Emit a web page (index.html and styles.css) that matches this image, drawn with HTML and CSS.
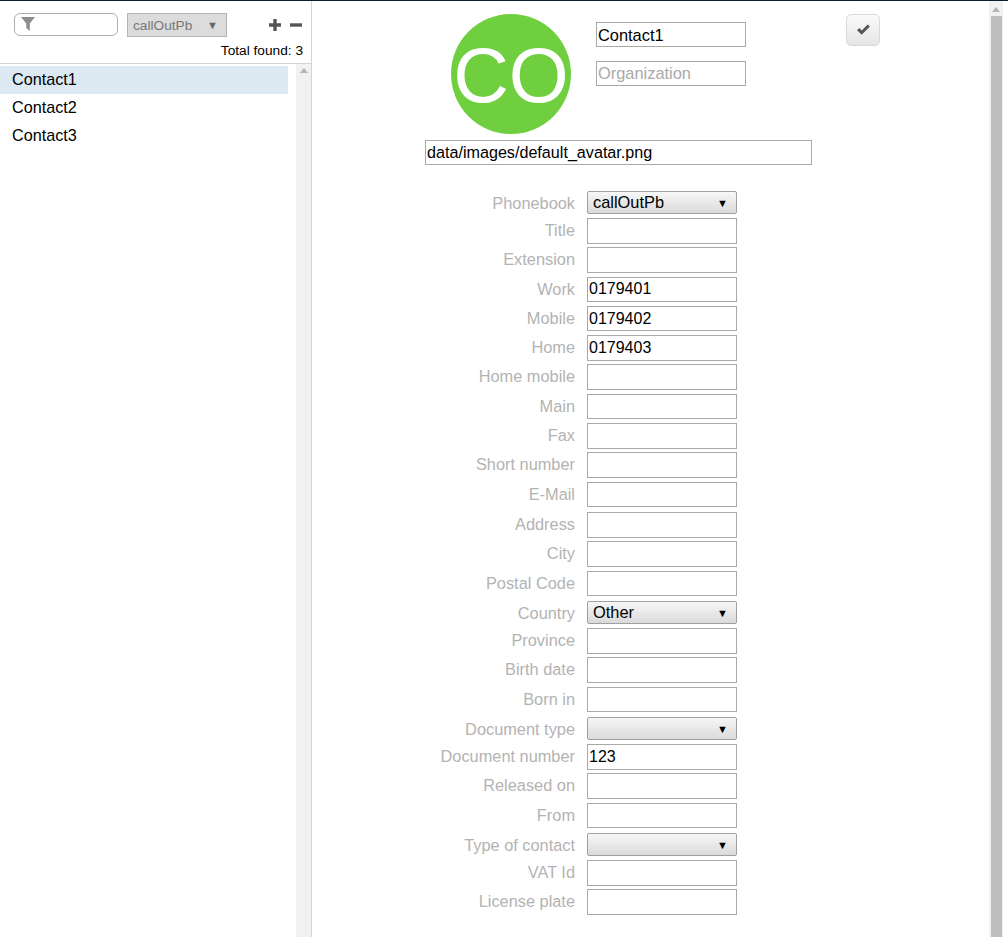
FILE: index.html
```html
<!DOCTYPE html>
<html lang="en">
<head>
<meta charset="utf-8">
<title>Contacts</title>
<link rel="stylesheet" href="styles.css">
</head>
<body>
<div class="app">
  <aside class="sidebar">
    <div class="toolbar">
      <div class="toolbar-row">
        <div class="filter">
          <svg class="filter-icon" viewBox="0 0 14 14" width="14" height="14"><path d="M0 0H14L8.8 6.6V14L5.2 11V6.6Z"/></svg>
        </div>
        <div class="pb-select"><span>callOutPb</span><span class="pb-arrow">▼</span></div>
        <div class="actions">
          <svg viewBox="0 0 12 12" width="12" height="12"><path d="M4.3 0H7.7V4.3H12V7.7H7.7V12H4.3V7.7H0V4.3H4.3Z"/></svg>
          <svg viewBox="0 0 12 12" width="12" height="12"><path d="M0 4.3H12V7.7H0Z"/></svg>
        </div>
      </div>
      <div class="total">Total found: 3</div>
    </div>
    <div class="list-wrap">
      <ul class="list">
        <li class="item selected">Contact1</li>
        <li class="item">Contact2</li>
        <li class="item">Contact3</li>
      </ul>
      <div class="list-scroll"><span class="arrow-up"></span></div>
    </div>
  </aside>
  <main class="main">
    <div class="form">
      <div class="head">
        <div class="avatar">CO</div>
        <div class="names">
          <input class="field name-field low-text" value="Contact1">
          <input class="field name-field" placeholder="Organization">
        </div>
        <button class="save" type="button"><svg viewBox="0 0 14 12" width="15" height="12"><path d="M0.6 6.2L2.8 4L5.2 6.4L11.2 0.4L13.4 2.6L5.2 10.8Z"/></svg></button>
      </div>
      <input class="field path-field" value="data/images/default_avatar.png">
      <div class="rows">
        <div class="row select-row"><label>Phonebook</label><div class="select"><span>callOutPb</span><span class="sel-arrow">▼</span></div></div>
        <div class="row"><label>Title</label><input class="field"></div>
        <div class="row"><label>Extension</label><input class="field"></div>
        <div class="row"><label>Work</label><input class="field" value="0179401"></div>
        <div class="row"><label>Mobile</label><input class="field" value="0179402"></div>
        <div class="row"><label>Home</label><input class="field" value="0179403"></div>
        <div class="row"><label>Home mobile</label><input class="field"></div>
        <div class="row"><label>Main</label><input class="field"></div>
        <div class="row"><label>Fax</label><input class="field"></div>
        <div class="row"><label>Short number</label><input class="field"></div>
        <div class="row"><label>E-Mail</label><input class="field"></div>
        <div class="row row-break"><label>Address</label><input class="field"></div>
        <div class="row"><label>City</label><input class="field"></div>
        <div class="row"><label>Postal Code</label><input class="field"></div>
        <div class="row select-row"><label>Country</label><div class="select"><span>Other</span><span class="sel-arrow">▼</span></div></div>
        <div class="row"><label>Province</label><input class="field"></div>
        <div class="row"><label>Birth date</label><input class="field"></div>
        <div class="row"><label>Born in</label><input class="field"></div>
        <div class="row select-row"><label>Document type</label><div class="select"><span></span><span class="sel-arrow">▼</span></div></div>
        <div class="row"><label>Document number</label><input class="field" value="123"></div>
        <div class="row"><label>Released on</label><input class="field"></div>
        <div class="row"><label>From</label><input class="field"></div>
        <div class="row select-row"><label>Type of contact</label><div class="select"><span></span><span class="sel-arrow">▼</span></div></div>
        <div class="row"><label>VAT Id</label><input class="field"></div>
        <div class="row"><label>License plate</label><input class="field"></div>
      </div>
    </div>
    <div class="main-scroll"><span class="arrow-up"></span><div class="thumb"></div></div>
  </main>
</div>
</body>
</html>
```

FILE: styles.css
```css
* { box-sizing: border-box; }
html, body { margin: 0; height: 100%; overflow: hidden; }
body { font-family: "Liberation Sans", Arial, sans-serif; font-size: 16px; color: #000; background: #fff; }
.app { display: flex; height: 937px; border-top: 1px solid #0f1f33; }
.sidebar { width: 312px; flex: none; border-right: 1px solid #d4d4d4; display: flex; flex-direction: column; }
.toolbar { height: 63px; flex: none; border-bottom: 1px solid #d4d4d4; padding: 12px 8px 0 14px; }
.toolbar-row { display: flex; align-items: flex-start; }
.filter { width: 104px; height: 23px; border: 1px solid #b0b0b0; border-radius: 6px; padding: 3px 0 0 6px; }
.filter-icon { fill: #8e8e8e; display: block; }
.pb-select { width: 100px; height: 24px; margin-left: 9px; background: #dcdcdc; border: 1px solid #b4b4b4; color: #777; font-size: 13.7px; display: flex; justify-content: space-between; align-items: center; padding: 0 8px 0 5px; }
.pb-arrow { font-size: 11px; color: #666; }
.actions { display: flex; gap: 9px; margin-left: 42px; margin-top: 6px; }
.actions svg { fill: #555; display: block; }
.total { font-size: 13.7px; text-align: right; margin-top: 6px; line-height: 15px; }
.list-wrap { flex: 1; display: flex; padding-top: 2px; min-height: 0; }
.list { list-style: none; margin: 0; padding: 0; width: 288px; flex: none; font-size: 16.2px; }
.item { height: 28px; line-height: 27px; padding-left: 12px; }
.item.selected { background: #dce8f2; }
.list-scroll { width: 15px; margin-left: 8px; background: #f1f1f1; padding-top: 4px; margin-top: -2px; display: flex; justify-content: center; align-items: flex-start; }
.arrow-up { display: block; width: 0; height: 0; border: 4px solid transparent; border-top: 0; border-bottom: 5px solid #b4b4b4; }
.main { flex: 1; position: relative; min-width: 0; }
.form { width: 500px; margin-left: 113px; padding-top: 13px; }
.head { display: flex; align-items: flex-start; height: 120px; padding-left: 26px; }
.avatar { width: 120px; height: 120px; border-radius: 50%; background: #6fcf3f; color: #fff; font-size: 77px; line-height: 122px; text-align: center; flex: none; white-space: nowrap; }
.names { width: 150px; margin-left: 25px; padding-top: 8px; display: flex; flex-direction: column; gap: 14px; flex: none; }
.field { display: block; width: 150px; height: 25.6px; border: 1px solid #a9a9a9; background: #fff; padding: 0 1px; margin: 0; font: 16px "Liberation Sans", Arial, sans-serif; color: #000; border-radius: 0; outline: none; }
.name-field { height: 25px; font-size: 16.4px; }
.low-text { padding-top: 2px; }
.field::placeholder { color: #a9a9a9; opacity: 1; }
.save { width: 34px; height: 32px; margin-left: 100px; padding: 0; border: 1px solid #d8d8d8; border-radius: 5px; background: linear-gradient(#fafafa, #e6e6e6); display: flex; align-items: center; justify-content: center; }
.save svg { fill: #555; display: block; }
.path-field { width: 387px; height: 25px; margin-top: 6px; font-size: 16.15px; }
.rows { margin-top: 26px; }
.row { display: flex; height: 29.29px; align-items: flex-start; }
.row-break { margin-top: 1.4px; }
.row label { width: 150px; text-align: right; color: #b3b3b3; margin-right: 12px; line-height: 24px; flex: none; white-space: nowrap; font-size: 16.35px; }
.select-row { height: 27px; margin-top: 1.1px; }
.select { width: 150px; height: 23px; border: 1px solid #a0a0a0; border-radius: 2px; background: linear-gradient(#f7f7f7, #dadada); display: flex; justify-content: space-between; align-items: center; padding: 0 8px 0 5px; font-size: 16.4px; }
.sel-arrow { font-size: 11px; }
.main-scroll { position: absolute; top: 0; right: 5px; width: 14px; height: 100%; background: #f1f1f1; padding-top: 6px; display: flex; flex-direction: column; align-items: center; }
.thumb { margin-top: 4px; width: 11px; flex: 1; background: #bdbdbd; }
```
